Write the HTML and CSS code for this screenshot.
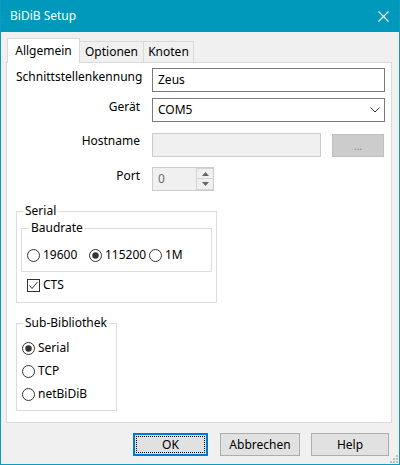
FILE: index.html
```html
<!DOCTYPE html>
<html>
<head>
<meta charset="utf-8">
<title>BiDiB Setup</title>
<link rel="stylesheet" href="styles.css">
</head>
<body>
<div class="window">
  <div class="titlebar">
    <span class="title">BiDiB Setup</span>
    <svg class="close" width="11" height="11" viewBox="0 0 11 11"><path d="M0.5 0.5 L10.5 10.5 M10.5 0.5 L0.5 10.5" stroke="#fff" stroke-width="1.1" fill="none"/></svg>
  </div>
  <div class="client">
    <div class="tabs">
      <div class="tab tab-a active">Allgemein</div>
      <div class="tab tab-o">Optionen</div>
      <div class="tab tab-k">Knoten</div>
    </div>
    <div class="panel">
      <div class="row r1">
        <span class="lbl">Schnittstellenkennung</span>
        <div class="field">Zeus</div>
      </div>
      <div class="row r2">
        <span class="lbl">Gerät</span>
        <div class="field combo">COM5
          <svg class="chev" width="10" height="6" viewBox="0 0 10 6"><polyline points="0.5,0.5 5,5 9.5,0.5" fill="none" stroke="#333" stroke-width="1"/></svg>
        </div>
      </div>
      <div class="row r3">
        <span class="lbl">Hostname</span>
        <div class="field disabled host"></div>
        <div class="dots-btn">...</div>
      </div>
      <div class="row r4">
        <span class="lbl">Port</span>
        <div class="field disabled spinner">
          <span class="spin-val">0</span>
          <div class="spin-btns">
            <div class="spin-b"><svg width="7" height="4" viewBox="0 0 7 4"><polygon points="3.5,0 7,4 0,4" fill="#666"/></svg></div>
            <div class="spin-b"><svg width="7" height="4" viewBox="0 0 7 4"><polygon points="0,0 7,0 3.5,4" fill="#666"/></svg></div>
          </div>
        </div>
      </div>

      <fieldset class="group serial">
        <legend>Serial</legend>
        <fieldset class="group baud">
          <legend>Baudrate</legend>
          <div class="radios">
            <div class="radio w1"><svg width="13" height="13" viewBox="0 0 13 13"><circle cx="6.5" cy="6.5" r="6" fill="#fff" stroke="#333"/></svg><span>19600</span></div>
            <div class="radio w2"><svg width="13" height="13" viewBox="0 0 13 13"><circle cx="6.5" cy="6.5" r="6" fill="#fff" stroke="#333"/><circle cx="6.5" cy="6.5" r="3.2" fill="#333"/></svg><span>115200</span></div>
            <div class="radio"><svg width="13" height="13" viewBox="0 0 13 13"><circle cx="6.5" cy="6.5" r="6" fill="#fff" stroke="#333"/></svg><span>1M</span></div>
          </div>
        </fieldset>
        <div class="check"><svg width="13" height="13" viewBox="0 0 13 13"><rect x="0.5" y="0.5" width="12" height="12" fill="#fff" stroke="#333"/><polyline points="2.5,6.5 5,9.5 10.5,3" fill="none" stroke="#333" stroke-width="1"/></svg><span>CTS</span></div>
      </fieldset>

      <fieldset class="group sub">
        <legend>Sub-Bibliothek</legend>
        <div class="radio-col">
          <div class="radio"><svg width="13" height="13" viewBox="0 0 13 13"><circle cx="6.5" cy="6.5" r="6" fill="#fff" stroke="#333"/><circle cx="6.5" cy="6.5" r="3.2" fill="#333"/></svg><span>Serial</span></div>
          <div class="radio"><svg width="13" height="13" viewBox="0 0 13 13"><circle cx="6.5" cy="6.5" r="6" fill="#fff" stroke="#333"/></svg><span>TCP</span></div>
          <div class="radio"><svg width="13" height="13" viewBox="0 0 13 13"><circle cx="6.5" cy="6.5" r="6" fill="#fff" stroke="#333"/></svg><span>netBiDiB</span></div>
        </div>
      </fieldset>
    </div>
    <div class="buttons">
      <div class="btn btn-ok">OK</div>
      <div class="btn btn-cancel">Abbrechen</div>
      <div class="btn btn-help">Help</div>
    </div>
  </div>
  <svg class="grip" width="10" height="10" viewBox="0 0 10 10">
    <rect x="8" y="2" width="2" height="2" fill="#bdbdbd"/>
    <rect x="5" y="5" width="2" height="2" fill="#bdbdbd"/>
    <rect x="8" y="5" width="2" height="2" fill="#bdbdbd"/>
    <rect x="2" y="8" width="2" height="2" fill="#bdbdbd"/>
    <rect x="5" y="8" width="2" height="2" fill="#bdbdbd"/>
    <rect x="8" y="8" width="2" height="2" fill="#bdbdbd"/>
  </svg>
</div>
</body>
</html>
```
FILE: styles.css
```css
html, body {
  margin: 0;
  padding: 0;
  background: #f0f0f0;
}
body {
  font-family: "Noto Sans", "Open Sans", sans-serif;
  font-size: 12px;
  line-height: 16px;
  color: #000;
}
.window {
  position: relative;
  width: 400px;
  height: 465px;
  box-sizing: border-box;
  border: 1px solid #0b9ac0;
  border-top: 0;
  background: #f0f0f0;
}
.titlebar {
  height: 32px;
  background: #0099bc;
  color: #fff;
  display: flex;
  align-items: center;
  justify-content: space-between;
  padding: 0 10px 0 9px;
}
.title {
  font-size: 12px;
}
.close {
  display: block;
}
.client {
  padding: 6px 7px 0 5px;
}
.tabs {
  display: flex;
  align-items: flex-end;
  height: 24px;
  padding-left: 1px;
}
.tab {
  box-sizing: border-box;
  height: 21px;
  border: 1px solid #d9d9d9;
  border-bottom: 0;
  background: #f0f0f0;
  display: flex;
  align-items: center;
  justify-content: center;
  margin-left: -1px;
  white-space: nowrap;
}
.tab.active {
  height: 25px;
  margin-left: 0;
  margin-bottom: -1px;
  background: #fff;
  position: relative;
  z-index: 1;
  padding-bottom: 1px;
}
.tab-a { width: 73px; }
.tab-o { width: 65px; }
.tab-k { width: 51px; }

.panel {
  box-sizing: border-box;
  height: 361px;
  border: 1px solid #d9d9d9;
  background: #fff;
  padding: 5px 6px 0 9px;
}
.row {
  display: flex;
  align-items: flex-start;
}
.r2 { margin-top: 6px; }
.r3 { margin-top: 11px; }
.r4 { margin-top: 10px; }
.lbl {
  width: 124px;
  flex: none;
  text-align: right;
  margin-right: 12px;
  padding-top: 1px;
  white-space: nowrap;
}
.r3 .lbl { padding-top: 0; }
.field {
  box-sizing: border-box;
  flex: 1;
  height: 24px;
  border: 1px solid #7a7a7a;
  background: #fff;
  padding-left: 5px;
  display: flex;
  align-items: center;
}
.combo .chev {
  margin-left: auto;
  margin-right: 4px;
}
.field.disabled {
  border-color: #cccccc;
  background: #f0f0f0;
}
.host {
  flex: none;
  width: 169px;
}
.dots-btn {
  box-sizing: border-box;
  width: 52px;
  height: 23px;
  margin-top: 1px;
  margin-left: 11px;
  background: #cccccc;
  border: 1px solid #bfbfbf;
  color: #838383;
  font-size: 10px;
  display: flex;
  align-items: center;
  justify-content: center;
}
.spinner {
  flex: none;
  width: 62px;
  padding-right: 0;
}
.spin-val {
  color: #6d6d6d;
}
.spin-btns {
  margin-left: auto;
  width: 17px;
  height: 22px;
  display: flex;
  flex-direction: column;
}
.spin-b {
  box-sizing: border-box;
  height: 11px;
  border: 1px solid #d4d4d4;
  border-right: 0;
  background: #f0f0f0;
  display: flex;
  align-items: center;
  justify-content: center;
}
.spin-b + .spin-b {
  border-top: 0;
}

.group {
  margin: 0;
  border: 1px solid #dcdcdc;
  min-inline-size: 0;
  box-sizing: border-box;
}
.group legend {
  padding: 0 2px;
  margin-left: 2px;
  line-height: 16px;
}
.serial {
  width: 201px;
  margin-top: 12px;
  padding: 1px 4px 9px 4px;
}
.baud {
  width: 191px;
  padding: 11px 4px 8px 5px;
}
.radios {
  display: flex;
}
.radio {
  display: flex;
  align-items: center;
  height: 16px;
}
.radio svg, .check svg {
  flex: none;
  margin-right: 3px;
}
.w1 { width: 62px; }
.w2 { width: 60px; }
.check {
  display: flex;
  align-items: center;
  height: 16px;
  margin-top: 5px;
  margin-left: 6px;
}
.sub {
  width: 101px;
  margin-top: 12px;
  padding: 9px 4px 8px 4px;
}
.radio-col {
  display: flex;
  flex-direction: column;
  gap: 7px;
  margin-left: 1px;
}

.buttons {
  display: flex;
  justify-content: flex-end;
  margin-top: 10px;
  padding-right: 3px;
}
.btn {
  box-sizing: border-box;
  height: 23px;
  border: 1px solid #adadad;
  background: #e1e1e1;
  display: flex;
  align-items: center;
  justify-content: center;
}
.btn-ok {
  width: 75px;
  border-color: #0078d7;
  box-shadow: inset 0 0 0 1px #0078d7;
  outline: 1px dotted #000;
  outline-offset: -4px;
}
.btn-cancel {
  width: 80px;
  margin-left: 12px;
}
.btn-help {
  width: 78px;
  margin-left: 11px;
}
.grip {
  position: absolute;
  right: 1px;
  bottom: 1px;
}
```
